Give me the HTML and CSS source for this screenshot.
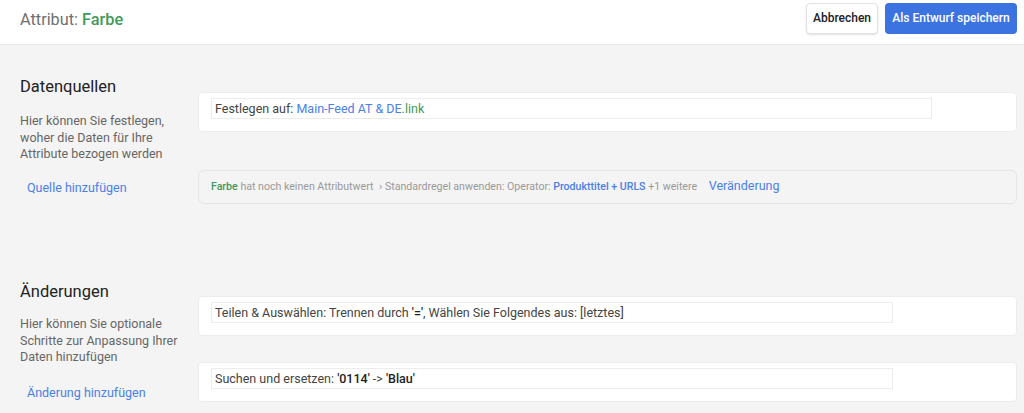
FILE: index.html
```html
<!DOCTYPE html>
<html lang="de">
<head>
    <meta charset="UTF-8">
    <meta name="viewport" content="width=device-width, initial-scale=1.0">
    <title>Attribut: Farbe</title>
    <link rel="stylesheet" href="styles.css">
</head>
<body>
    <header class="topbar">
        <h1 class="title">Attribut: <span class="green">Farbe</span></h1>
        <div class="actions">
            <button class="btn btn-plain">Abbrechen</button>
            <button class="btn btn-primary">Als Entwurf speichern</button>
        </div>
    </header>

    <section class="section section-sources">
        <div class="side">
            <h2>Datenquellen</h2>
            <p>Hier können Sie festlegen, woher die Daten für Ihre Attribute bezogen werden</p>
            <a class="add-link" href="#">Quelle hinzufügen</a>
        </div>
        <div class="main">
            <div class="card">
                <div class="field field-wide">Festlegen auf: <span class="blue">Main-Feed AT &amp; DE</span><span class="green">.link</span></div>
            </div>
            <div class="card card-muted">
                <span class="green strong">Farbe</span> hat noch keinen Attributwert <span class="sep">›</span> Standardregel anwenden: Operator: <span class="blue strong">Produkttitel + URLS</span> +1 weitere
                <a class="change-link" href="#">Veränderung</a>
            </div>
        </div>
    </section>

    <section class="section section-changes">
        <div class="side">
            <h2>Änderungen</h2>
            <p>Hier können Sie optionale Schritte zur Anpassung Ihrer Daten hinzufügen</p>
            <a class="add-link" href="#">Änderung hinzufügen</a>
        </div>
        <div class="main">
            <div class="card">
                <div class="field">Teilen &amp; Auswählen: Trennen durch <b>'='</b>, Wählen Sie Folgendes aus: [letztes]</div>
            </div>
            <div class="card">
                <div class="field">Suchen und ersetzen: <b>'0114'</b> -&gt; <b>'Blau'</b></div>
            </div>
        </div>
    </section>
</body>
</html>
```

FILE: styles.css
```css
/* Base */
body {
    margin: 0;
    font-family: Roboto, 'Liberation Sans', sans-serif;
    background: #f4f4f4;
    color: #333;
    height: 413px;
    overflow: hidden;
}

.green { color: #3f9a5b; }
.blue { color: #4a80e8; }
.strong { font-weight: 500; }

/* Top bar */
.topbar {
    height: 44px;
    background: #fff;
    border-bottom: 1px solid #ebebeb;
    display: flex;
    align-items: center;
    justify-content: space-between;
    padding: 0 7px 0 20px;
}

.title {
    margin: 0 0 6px;
    font-size: 16.3px;
    font-weight: 400;
    color: #6f6f6f;
}

.title .green { font-weight: 500; }

.actions {
    display: flex;
    gap: 7px;
    margin-bottom: 8px;
}

.btn {
    height: 31px;
    font-family: inherit;
    font-size: 12px;
    font-weight: 500;
    white-space: nowrap;
    border-radius: 4px;
    cursor: pointer;
}

.btn-plain {
    background: #fff;
    color: #222;
    border: 1px solid #e2e2e2;
    box-shadow: 0 1px 2px rgba(0, 0, 0, 0.12);
    padding: 0 6px;
    width: 72px;
}

.btn-primary {
    background: #3b74e0;
    color: #fff;
    border: none;
    padding: 0 7px;
    width: 132px;
}

/* Sections */
.section {
    display: flex;
    padding: 0 7px 0 20px;
}

.section-sources { padding-top: 31px; }
.section-changes { padding-top: 77px; }

.side {
    width: 178px;
    flex: none;
}

.side h2 {
    margin: 0;
    font-size: 16.5px;
    font-weight: 400;
    color: #222;
    line-height: 22px;
}

.side p {
    margin: 15px 0 0;
    font-size: 12.5px;
    line-height: 16.5px;
    color: #666;
}

.section-changes .side p { margin-top: 13px; }

.add-link {
    display: block;
    margin: 17px 0 0 7px;
    font-size: 12.5px;
    color: #4a80e8;
    text-decoration: none;
}

.section-changes .add-link { margin-top: 19px; }

.main {
    flex: 1;
    padding-top: 16px;
}

.section-changes .main { padding-top: 15px; }

/* Cards */
.card {
    background: #fff;
    border: 1px solid #ececec;
    border-radius: 4px;
    padding: 5px 12px 12px;
    margin-bottom: 26px;
}

.field {
    width: 674px;
    height: 19px;
    border: 1px solid #ececec;
    padding: 0 3px;
    font-size: 12.5px;
    line-height: 19px;
    color: #444;
}

.field-wide { width: 713px; }

.field b {
    font-weight: 500;
    color: #222;
}

.card-muted {
    background: #f4f4f4;
    border-color: #e6e6e6;
    border-radius: 6px;
    padding: 7px 12px 8px;
    font-size: 10.6px;
    line-height: 16px;
    color: #999;
    margin-top: 38px;
    margin-bottom: 0;
}

.card-muted .sep { margin-left: 3px; }

.change-link {
    margin-left: 9px;
    font-size: 12.5px;
    color: #4a80e8;
    text-decoration: none;
}
```
